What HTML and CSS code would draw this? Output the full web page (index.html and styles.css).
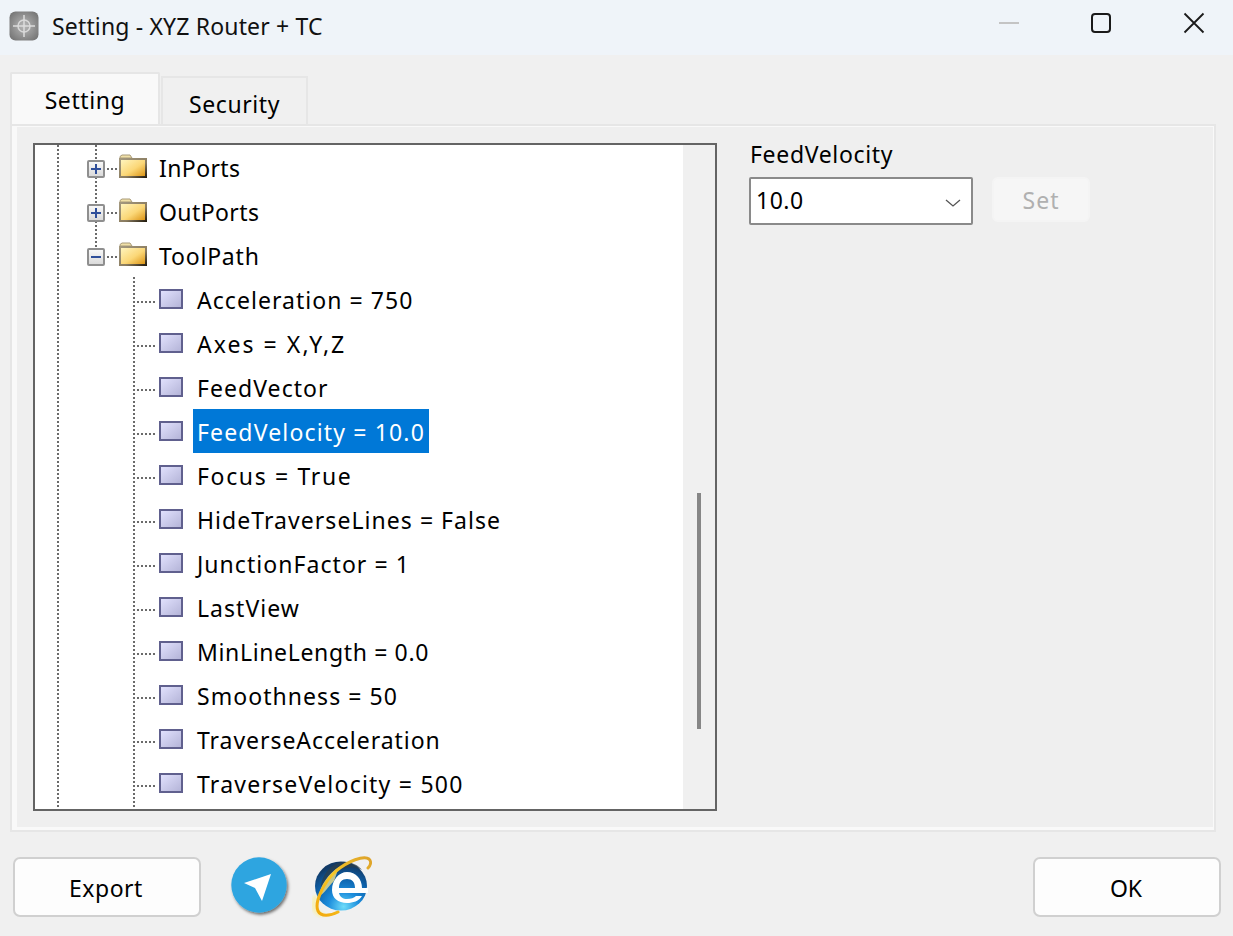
FILE: index.html
```html
<!DOCTYPE html>
<html lang="en">
<head>
<meta charset="utf-8">
<title>Setting - XYZ Router + TC</title>
<link rel="stylesheet" href="styles.css">
</head>
<body>
<div class="window">
  <header class="titlebar">
    <svg class="app-icon" width="30" height="30" viewBox="0 0 30 30">
      <defs>
        <radialGradient id="appg" cx="50%" cy="50%" r="65%">
          <stop offset="0" stop-color="#b8b8b8"/>
          <stop offset="1" stop-color="#727272"/>
        </radialGradient>
      </defs>
      <rect x="0.5" y="0.5" width="29" height="29" rx="6" fill="url(#appg)"/>
      <circle cx="15" cy="15" r="6" fill="none" stroke="#d8d8d8" stroke-width="1.5"/>
      <path d="M15 4V26M4 15H26" stroke="#dcdcdc" stroke-width="1.5"/>
    </svg>
    <span class="title">Setting - XYZ Router + TC</span>
    <div class="controls">
      <svg class="ctl ctl-min" width="20" height="20" viewBox="0 0 20 20"><path d="M0 10H20" stroke="#c4c4c4" stroke-width="2"/></svg>
      <svg class="ctl ctl-max" width="22" height="22" viewBox="0 0 22 22"><rect x="2" y="2" width="18" height="18" rx="3" fill="none" stroke="#1a1a1a" stroke-width="2"/></svg>
      <svg class="ctl ctl-close" width="22" height="22" viewBox="0 0 22 22"><path d="M1.5 1.5L20.5 20.5M20.5 1.5L1.5 20.5" stroke="#1a1a1a" stroke-width="1.8"/></svg>
    </div>
  </header>

  <main class="content">
    <nav class="tabs">
      <div class="tab tab-active">Setting</div>
      <div class="tab tab-idle">Security</div>
    </nav>
    <section class="panel">
      <div class="panel-inner">
        <div class="tree">
          <div class="tree-view">
            <div class="row row-branch guide-stem">
              <svg class="expander" width="18" height="18" viewBox="0 0 18 18"><use href="#box"/><path d="M4 9H14M9 4V14" stroke="#2f4f9a" stroke-width="2"/></svg>
              <svg class="folder" width="28" height="24" viewBox="0 0 28 24"><use href="#fld"/></svg>
              <span class="label">InPorts</span>
            </div>
            <div class="row row-branch guide-stem">
              <svg class="expander" width="18" height="18" viewBox="0 0 18 18"><use href="#box"/><path d="M4 9H14M9 4V14" stroke="#2f4f9a" stroke-width="2"/></svg>
              <svg class="folder" width="28" height="24" viewBox="0 0 28 24"><use href="#fld"/></svg>
              <span class="label">OutPorts</span>
            </div>
            <div class="row row-branch guide-stem-end">
              <svg class="expander" width="18" height="18" viewBox="0 0 18 18"><use href="#box"/><path d="M4 9H14" stroke="#2f4f9a" stroke-width="2"/></svg>
              <svg class="folder" width="28" height="24" viewBox="0 0 28 24"><use href="#fld"/></svg>
              <span class="label label-toolpath">ToolPath</span>
            </div>
            <div class="row row-leaf"><svg class="leaf" width="24" height="20" viewBox="0 0 24 20"><use href="#sq"/></svg><span class="label">Acceleration = 750</span></div>
            <div class="row row-leaf"><svg class="leaf" width="24" height="20" viewBox="0 0 24 20"><use href="#sq"/></svg><span class="label label-axes">Axes = X,Y,Z</span></div>
            <div class="row row-leaf"><svg class="leaf" width="24" height="20" viewBox="0 0 24 20"><use href="#sq"/></svg><span class="label">FeedVector</span></div>
            <div class="row row-leaf"><svg class="leaf" width="24" height="20" viewBox="0 0 24 20"><use href="#sq"/></svg><span class="label label-selected">FeedVelocity = 10.0</span></div>
            <div class="row row-leaf"><svg class="leaf" width="24" height="20" viewBox="0 0 24 20"><use href="#sq"/></svg><span class="label label-focus">Focus = True</span></div>
            <div class="row row-leaf"><svg class="leaf" width="24" height="20" viewBox="0 0 24 20"><use href="#sq"/></svg><span class="label">HideTraverseLines = False</span></div>
            <div class="row row-leaf"><svg class="leaf" width="24" height="20" viewBox="0 0 24 20"><use href="#sq"/></svg><span class="label">JunctionFactor = 1</span></div>
            <div class="row row-leaf"><svg class="leaf" width="24" height="20" viewBox="0 0 24 20"><use href="#sq"/></svg><span class="label">LastView</span></div>
            <div class="row row-leaf"><svg class="leaf" width="24" height="20" viewBox="0 0 24 20"><use href="#sq"/></svg><span class="label label-minline">MinLineLength = 0.0</span></div>
            <div class="row row-leaf"><svg class="leaf" width="24" height="20" viewBox="0 0 24 20"><use href="#sq"/></svg><span class="label">Smoothness = 50</span></div>
            <div class="row row-leaf"><svg class="leaf" width="24" height="20" viewBox="0 0 24 20"><use href="#sq"/></svg><span class="label label-travacc">TraverseAcceleration</span></div>
            <div class="row row-leaf"><svg class="leaf" width="24" height="20" viewBox="0 0 24 20"><use href="#sq"/></svg><span class="label label-travvel">TraverseVelocity = 500</span></div>
            <div class="row row-tail"></div>
          </div>
          <div class="scrollbar"><div class="thumb"></div></div>
        </div>
        <aside class="editor">
          <div class="editor-label">FeedVelocity</div>
          <div class="editor-row">
            <div class="select">
              <span>10.0</span>
              <svg width="16" height="8" viewBox="0 0 16 8"><path d="M1 1L8 7L15 1" fill="none" stroke="#555" stroke-width="1.3"/></svg>
            </div>
            <div class="set-btn">Set</div>
          </div>
        </aside>
      </div>
    </section>
  </main>

  <footer class="footer">
    <div class="btn btn-export">Export</div>
    <svg class="telegram" width="62" height="64" viewBox="0 0 62 64">
      <defs>
        <filter id="tgs" x="-20%" y="-20%" width="140%" height="140%">
          <feDropShadow dx="1.5" dy="2" stdDeviation="1.4" flood-color="#000" flood-opacity="0.55"/>
        </filter>
      </defs>
      <circle cx="29" cy="30" r="27.7" fill="#2ea5e0" filter="url(#tgs)"/>
      <path d="M14 28L41 19L32 46L25 33Z" fill="#fff"/>
    </svg>
    <svg class="ie" width="60" height="62" viewBox="0 0 60 62">
      <defs>
        <radialGradient id="ieb" cx="55%" cy="92%" r="85%">
          <stop offset="0" stop-color="#6ddcfa"/>
          <stop offset="0.35" stop-color="#1c8ddc"/>
          <stop offset="0.7" stop-color="#0d5fa8"/>
          <stop offset="1" stop-color="#123a66"/>
        </radialGradient>
        <linearGradient id="ier" x1="0" y1="1" x2="1" y2="0">
          <stop offset="0" stop-color="#f2a80c"/>
          <stop offset="0.5" stop-color="#f8c826"/>
          <stop offset="1" stop-color="#dda22a"/>
        </linearGradient>
        <filter id="ieglow" x="-50%" y="-50%" width="200%" height="200%">
          <feGaussianBlur stdDeviation="1.6"/>
        </filter>
      </defs>
      <ellipse cx="29" cy="30" rx="26" ry="24.5" fill="url(#ieb)"/>
      <path d="M9 30C10 20 18 8 30 6C38 5 46 9 50 14C40 8 26 12 18 22C14 27 12 32 9 30Z" fill="#2b3f4e" opacity="0.75"/>
      <path d="M7 40C8 30 16 18 27 11L22 25C16 31 12 38 7 40Z" fill="#e6d98a" opacity="0.85"/>
      <path fill="#fff" fill-rule="evenodd" d="M20 34C20 24 27 16 35 16C44 16 50 23 50 32H56V37H27C28 41 31 43 35 43C39 43 42 42 44 40H50C47 45 41 47 35 47C26 47 20 42 20 34ZM27 32H43C43 26 40 23 35 23C30 23 27 26 27 32Z"/>
      <path d="M4 40C0 48 1 58 12 59" fill="none" stroke="#f8f0a8" stroke-width="5" opacity="0.8" filter="url(#ieglow)"/>
      <path d="M26 56C18 60 9 61 6 55C2 46 12 26 24 15C36 5 52 -1 57 3C60 6 58 10 56 12" fill="none" stroke="url(#ier)" stroke-width="3" stroke-linecap="round"/>
    </svg>
    <div class="footer-spacer"></div>
    <div class="btn btn-ok">OK</div>
  </footer>
</div>

<svg class="defs" width="0" height="0">
  <defs>
    <linearGradient id="boxg" x1="0" y1="0" x2="0" y2="1"><stop offset="0" stop-color="#fafafa"/><stop offset="1" stop-color="#d8d8d8"/></linearGradient>
    <linearGradient id="fldg" x1="0" y1="0" x2="1" y2="1"><stop offset="0" stop-color="#fff4bd"/><stop offset="0.55" stop-color="#fbd777"/><stop offset="1" stop-color="#dc9516"/></linearGradient>
    <linearGradient id="fldb" x1="0" y1="0" x2="1" y2="1"><stop offset="0" stop-color="#a59a80"/><stop offset="0.6" stop-color="#8a7c60"/><stop offset="1" stop-color="#1b1408"/></linearGradient>
    <linearGradient id="sqg" x1="0" y1="0" x2="1" y2="1"><stop offset="0" stop-color="#e3e3ff"/><stop offset="1" stop-color="#b2b2d6"/></linearGradient>
    <g id="box"><rect x="1" y="1" width="16" height="16" rx="1" fill="url(#boxg)" stroke="#8f8f8f" stroke-width="2"/></g>
    <g id="fld">
      <path d="M1 4V2.5L3 1H11L13 4Z" fill="#f0e0a8" stroke="#a89a78" stroke-width="1"/>
      <rect x="0" y="4" width="28" height="20" fill="url(#fldb)"/>
      <path d="M2 6H26V22H2Z" fill="url(#fldg)"/>
    </g>
    <g id="sq"><rect x="1" y="1" width="22" height="18" fill="url(#sqg)" stroke="#60608e" stroke-width="2"/></g>
  </defs>
</svg>
</body>
</html>
```
FILE: styles.css
```css
* { box-sizing: border-box; }
html, body { margin: 0; padding: 0; }
body {
  width: 1233px;
  height: 936px;
  overflow: hidden;
  background: #f0f0f0;
  font-family: "Noto Sans", "Open Sans", sans-serif;
  font-size: 23px;
  color: #000;
}
.defs { position: absolute; }
.window { display: flex; flex-direction: column; height: 936px; }

.titlebar {
  height: 55px;
  flex: none;
  background: #eff4f9;
  display: flex;
  align-items: center;
  padding: 0 0 3px 9px;
}
.app-icon { flex: none; }
.title { margin-left: 13px; font-size: 23px; letter-spacing: 0.16px; color: #111; }
.controls { margin-left: auto; margin-top: -6px; display: flex; align-items: center; }
.ctl-min { margin-right: 71px; }
.ctl-max { margin-right: 71px; }
.ctl-close { margin-right: 28px; }

.content {
  flex: none;
  padding: 17px 17px 0 10px;
}
.tabs { display: flex; align-items: flex-end; height: 52px; letter-spacing: 0.6px; }
.tab { display: flex; justify-content: center; }
.tab-active {
  width: 150px;
  height: 52px;
  padding-top: 10px;
  background: #f9f9f9;
  border: 2px solid #e6e6e6;
  border-bottom: 0;
  border-radius: 2px 2px 0 0;
}
.tab-idle {
  width: 147px;
  height: 48px;
  margin-left: 1px;
  padding-top: 10px;
  background: #f0f0f0;
  border: 2px solid #e6e6e6;
  border-bottom: 0;
}
.panel {
  height: 708px;
  width: 1206px;
  background: #f9f9f9;
  border: 2px solid #e6e6e6;
  padding: 1px 1px 3px 5px;
}
.panel-inner {
  height: 100%;
  background: #efefef;
  padding: 16px 0 0 16px;
  display: flex;
}

.tree {
  width: 684px;
  height: 668px;
  flex: none;
  border: 2px solid #646464;
  display: flex;
  background: #f0f0f0;
}
.tree-view { width: 648px; flex: none; background: #fff; overflow: hidden; }
.scrollbar { flex: 1; padding: 348px 0 0 14px; }
.thumb { width: 4px; height: 236px; background: #868686; }

.row {
  height: 44px;
  display: flex;
  align-items: center;
  --dots-v: repeating-linear-gradient(to bottom, #6a6a6a 0 2px, transparent 2px 4px);
  --dots-h: repeating-linear-gradient(to right, #6a6a6a 0 2px, transparent 2px 4px);
  background-repeat: no-repeat;
}
.guide-stem {
  background-image: var(--dots-v), var(--dots-v), var(--dots-h);
  background-size: 2px 100%, 2px 100%, 12px 2px;
  background-position: 22px 0, 60px 0, 72px 23px;
}
.guide-stem-end {
  background-image: var(--dots-v), var(--dots-v), var(--dots-h);
  background-size: 2px 100%, 2px 22px, 12px 2px;
  background-position: 22px 0, 60px 0, 72px 23px;
}
.row-branch { padding-left: 52px; }
.expander { flex: none; margin-top: 4px; }
.folder { flex: none; margin-left: 14px; margin-top: -2px; }
.row-branch .label { margin-left: 8px; padding: 1px 4px 0; letter-spacing: 0.4px; height: 44px; }
.row-branch .label-toolpath { letter-spacing: 0.8px; }

.row-leaf {
  padding-left: 124px;
  background-image: var(--dots-v), var(--dots-v), var(--dots-h);
  background-size: 2px 100%, 2px 100%, 20px 2px;
  background-position: 22px 0, 98px 0, 102px 24px;
}
.leaf { flex: none; }
.row-leaf .label { margin-left: 10px; padding: 1px 4px 0; height: 44px; letter-spacing: 1.05px; }
.row-leaf .label-axes { letter-spacing: 2.05px; }
.row-leaf .label-focus { letter-spacing: 1.65px; }
.row-leaf .label-minline { letter-spacing: 0.65px; }
.row-leaf .label-travacc { letter-spacing: 0.95px; }
.row-leaf .label-travvel { letter-spacing: 1.23px; }
.row-leaf .label-selected { letter-spacing: 1.16px; background: #0078d7; color: #fff; }
.label { white-space: nowrap; line-height: 44px; }
.row-tail {
  height: 4px;
  background-image: repeating-linear-gradient(to bottom, #6a6a6a 0 2px, transparent 2px 4px), repeating-linear-gradient(to bottom, #6a6a6a 0 2px, transparent 2px 4px);
  background-size: 2px 100%, 2px 100%;
  background-position: 22px 0, 98px 0;
}

.editor { margin-left: 32px; }
.editor-label { line-height: 26px; margin-left: 1px; margin-top: -2px; letter-spacing: 0.67px; }
.editor-row { display: flex; margin-top: 10px; align-items: flex-start; }
.select {
  width: 224px;
  height: 48px;
  background: #fff;
  border: 2px solid #8a8a8a;
  border-radius: 2px;
  display: flex;
  align-items: center;
  justify-content: space-between;
  padding: 0 10px 2px 5px;
  letter-spacing: 0.5px;
}
.select svg { margin-top: 6px; }
.set-btn {
  width: 98px;
  height: 45px;
  margin-left: 19px;
  background: #f6f6f6;
  border: 2px solid #f4f4f4;
  border-radius: 6px;
  color: #b0b0b0;
  letter-spacing: 1px;
  display: flex;
  align-items: center;
  justify-content: center;
}

.footer {
  flex: none;
  display: flex;
  align-items: center;
  padding: 23px 12px 0 13px;
}
.btn {
  width: 188px;
  height: 60px;
  padding: 2px 2px 0 0;
  background: #fdfdfd;
  border: 2px solid #d0d0d0;
  border-radius: 7px;
  display: flex;
  align-items: center;
  justify-content: center;
}
.btn-export { letter-spacing: 0.5px; }
.telegram { flex: none; margin-left: 29px; }
.ie { flex: none; margin-left: 20px; }
.footer-spacer { flex: 1; }
```
